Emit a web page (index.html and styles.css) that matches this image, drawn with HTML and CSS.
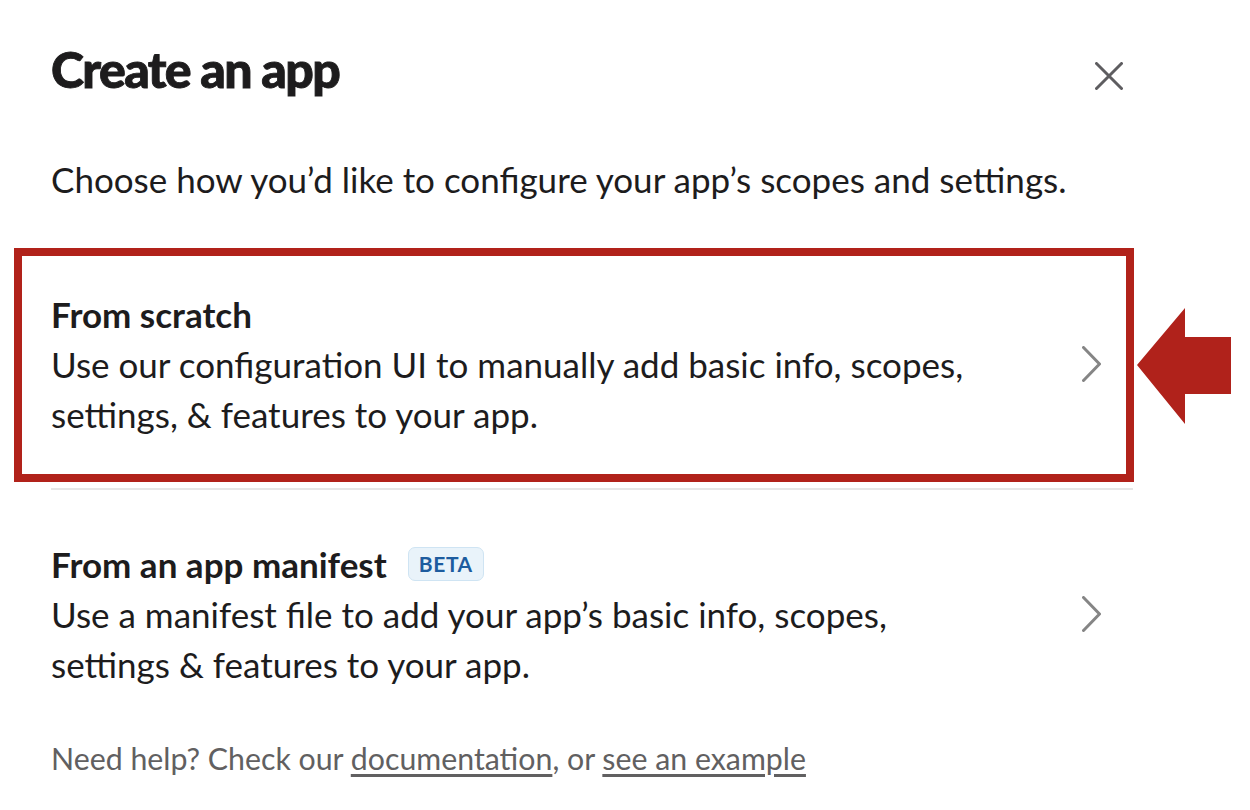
FILE: index.html
```html
<!DOCTYPE html>
<html lang="en">
<head>
<meta charset="utf-8">
<title>Create an app</title>
<link rel="stylesheet" href="styles.css">
</head>
<body>
<div class="modal">
  <header class="modal-header">
    <h1 class="modal-title">Create an app</h1>
    <button class="close-btn" aria-label="Close">
      <svg width="28" height="28" viewBox="0 0 28 28"><path d="M1.5 1.5 L26.5 26.5 M26.5 1.5 L1.5 26.5" stroke="#5e5d60" stroke-width="3" stroke-linecap="round" fill="none"/></svg>
    </button>
  </header>
  <p class="intro">Choose how you’d like to configure your app’s scopes and settings.</p>
  <div class="options">
    <div class="option">
      <div class="option-text">
        <div class="option-title">From scratch</div>
        <div class="option-desc">Use our configuration UI to manually add basic info, scopes, settings, &amp; features to your app.</div>
      </div>
      <svg class="chevron" width="19" height="36" viewBox="0 0 19 36"><path d="M1.5 1.5 L17.5 18 L1.5 34.5" stroke="#858585" stroke-width="3" stroke-linecap="round" stroke-linejoin="round" fill="none"/></svg>
    </div>
    <div class="option">
      <div class="option-text">
        <div class="option-title">From an app manifest <span class="badge">BETA</span></div>
        <div class="option-desc">Use a manifest file to add your app’s basic info, scopes, settings &amp; features to your app.</div>
      </div>
      <svg class="chevron" width="19" height="36" viewBox="0 0 19 36"><path d="M1.5 1.5 L17.5 18 L1.5 34.5" stroke="#858585" stroke-width="3" stroke-linecap="round" stroke-linejoin="round" fill="none"/></svg>
    </div>
  </div>
  <p class="help">Need help? Check our <a href="#">documentation</a>, or <a href="#">see an example</a></p>
  <div class="highlight-box"></div>
  <svg class="pointer-arrow" width="95" height="117" viewBox="0 0 95 117"><polygon points="0,57 48,0 48,29 94,29 94,86 48,86 48,116" fill="#b0221b"/></svg>
</div>
</body>
</html>
```

FILE: styles.css
```css
html, body {
  margin: 0;
  padding: 0;
  background: #ffffff;
}

body {
  font-family: Lato, "Open Sans", "Liberation Sans", sans-serif;
  color: #1d1c1d;
  width: 1250px;
  height: 810px;
  overflow: hidden;
}

.modal {
  position: relative;
  width: 1082px;
  padding: 39px 0 0 51px;
}

.modal-header {
  display: flex;
  justify-content: space-between;
  align-items: flex-start;
}

.modal-title {
  margin: 0;
  font-size: 50px;
  line-height: 60px;
  font-weight: 900;
  letter-spacing: -1.6px;
  -webkit-text-stroke: 0.9px #1d1c1d;
}

.close-btn {
  background: none;
  border: 0;
  padding: 0;
  margin: 23px 10px 0 0;
  width: 28px;
  height: 28px;
  display: block;
}

.close-btn svg {
  display: block;
}

.intro {
  margin: 55px 0 0;
  font-size: 35px;
  line-height: 50px;
}

.options {
  margin-top: 36px;
}

.option {
  display: flex;
  align-items: center;
  justify-content: space-between;
  padding: 49px 32px 49px 0;
}

.option + .option {
  border-top: 2px solid #e6e6e6;
}

.option-text {
  max-width: 935px;
}

.option-title {
  font-size: 35px;
  line-height: 50px;
  font-weight: 700;
  display: flex;
  align-items: center;
}

.option-desc {
  font-size: 35px;
  line-height: 50px;
}

.chevron {
  display: block;
  flex-shrink: 0;
}

.badge {
  display: inline-block;
  margin-left: 21px;
  padding: 0 10px;
  height: 32px;
  line-height: 32px;
  font-size: 21px;
  font-weight: 700;
  letter-spacing: 0.6px;
  color: #1d5c9f;
  background: #e9f3fa;
  border: 1px solid #cfe4f3;
  border-radius: 7px;
}

.help {
  margin: 0;
  font-size: 30.3px;
  line-height: 41px;
  color: #616061;
}

.help a {
  color: #616061;
  text-decoration: underline;
  text-underline-offset: 4px;
}

.highlight-box {
  position: absolute;
  left: 14px;
  top: 248px;
  width: 1104px;
  height: 218px;
  border: 8px solid #b1221a;
}

.pointer-arrow {
  position: absolute;
  left: 1137px;
  top: 308px;
}
```
